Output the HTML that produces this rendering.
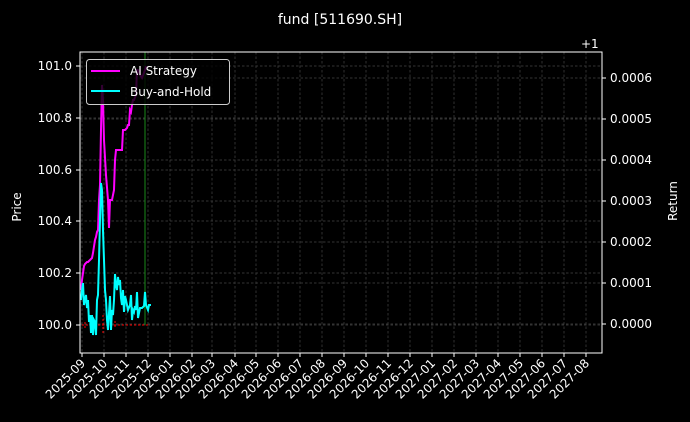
<!DOCTYPE html>
<html><head><meta charset="utf-8"><style>
html,body{margin:0;padding:0;background:#000;width:690px;height:422px;overflow:hidden}
svg{display:block}
text{font-family:"DejaVu Sans","Liberation Sans",sans-serif;fill:#fff}
</style></head><body>
<svg width="690" height="422" viewBox="0 0 690 422">
<rect width="690" height="422" fill="#000"/>
<text x="340" y="24" font-size="14" text-anchor="middle">fund [511690.SH]</text>
<text x="581" y="48" font-size="12">+1</text>
<g stroke="#444" stroke-width="0.7" stroke-dasharray="2.5,2" fill="none">
<path d="M82 52V353M104 52V353M126 52V353M148 52V353M170 52V353M192 52V353M212 52V353M235 52V353M256 52V353M278 52V353M300 52V353M322 52V353M344 52V353M366 52V353M388 52V353M410 52V353M432 52V353M454 52V353M476 52V353M498 52V353M520 52V353M542 52V353M564 52V353M586 52V353"/>
<path d="M80 66H602M80 118H602M80 170H602M80 221H602M80 273H602M80 325H602"/>
<path d="M80 78H602M80 119H602M80 160H602M80 201H602M80 242H602M80 283H602M80 324H602"/>
</g>
<g stroke="#f00" stroke-width="1" stroke-dasharray="2,2" fill="none">
<path d="M82 325H150M103 315V335M85 322V328M92 322V328M115 321V327"/>
</g>
<path d="M145 52V325" stroke="#1a8a1a" stroke-width="1"/>
<polyline fill="none" stroke="#f0f" stroke-width="2" points="81,290 82,280 84,266 85,264 87,262 88,262 90,260 92,258 93,253 95,240 96,237 97,232 98,230 99,200 100,185 101,130 102,85 103,100 104,140 106,175 108,200 109,228 110,200 112,200 114,190 115,160 116,150 118,150 120,150 122,150 123,130 125,130 127,128 128,125 129,125 130,110 131,112 132,105 133,100 134,100 136,95 137,70 138,70 140,75 142,78 145,70 146,66"/>
<polyline fill="none" stroke="#0ff" stroke-width="2" points="81,300 82,290 83,283 84,305 86,295 87,308 88,300 89,322 90,315 91,333 92,315 93,335 94,320 95,322 96,335 97,300 98,295 99,260 100,220 101,183 102,190 103,230 104,260 105,290 106,300 107,320 108,330 110,296 111,330 112,310 113,315 114,300 115,274 116,285 117,290 118,277 119,285 120,280 121,298 122,305 123,290 124,312 125,296 126,300 128,310 130,305 131,295 132,320 133,310 134,312 135,306 136,310 137,292 138,318 140,308 142,308 144,306 145,292 146,305 148,310 149,305 151,305"/>
<rect x="80" y="52" width="522" height="301" fill="none" stroke="#fff" stroke-width="1"/>
<g stroke="#fff" stroke-width="1">
<path d="M82 353v4M104 353v4M126 353v4M148 353v4M170 353v4M192 353v4M212 353v4M235 353v4M256 353v4M278 353v4M300 353v4M322 353v4M344 353v4M366 353v4M388 353v4M410 353v4M432 353v4M454 353v4M476 353v4M498 353v4M520 353v4M542 353v4M564 353v4M586 353v4"/>
<path d="M80 66h-4M80 118h-4M80 170h-4M80 221h-4M80 273h-4M80 325h-4"/>
<path d="M602 78h4M602 119h4M602 160h4M602 201h4M602 242h4M602 283h4M602 324h4"/>
</g>
<g font-size="12" text-anchor="end">
<text x="72" y="70">101.0</text><text x="72" y="122">100.8</text><text x="72" y="174">100.6</text><text x="72" y="225">100.4</text><text x="72" y="277">100.2</text><text x="72" y="329">100.0</text>
</g>
<g font-size="12">
<text x="610" y="82">0.0006</text><text x="610" y="123">0.0005</text><text x="610" y="164">0.0004</text><text x="610" y="205">0.0003</text><text x="610" y="246">0.0002</text><text x="610" y="287">0.0001</text><text x="610" y="328">0.0000</text>
</g>
<text font-size="12" text-anchor="middle" transform="translate(21,207) rotate(-90)">Price</text>
<text font-size="12" text-anchor="middle" transform="translate(677,201) rotate(-90)">Return</text>
<g font-size="12" text-anchor="end">
<text transform="translate(86,364) rotate(-45)">2025-09</text>
<text transform="translate(108,364) rotate(-45)">2025-10</text>
<text transform="translate(130,364) rotate(-45)">2025-11</text>
<text transform="translate(152,364) rotate(-45)">2025-12</text>
<text transform="translate(174,364) rotate(-45)">2026-01</text>
<text transform="translate(196,364) rotate(-45)">2026-02</text>
<text transform="translate(216,364) rotate(-45)">2026-03</text>
<text transform="translate(239,364) rotate(-45)">2026-04</text>
<text transform="translate(260,364) rotate(-45)">2026-05</text>
<text transform="translate(282,364) rotate(-45)">2026-06</text>
<text transform="translate(304,364) rotate(-45)">2026-07</text>
<text transform="translate(326,364) rotate(-45)">2026-08</text>
<text transform="translate(348,364) rotate(-45)">2026-09</text>
<text transform="translate(370,364) rotate(-45)">2026-10</text>
<text transform="translate(392,364) rotate(-45)">2026-11</text>
<text transform="translate(414,364) rotate(-45)">2026-12</text>
<text transform="translate(436,364) rotate(-45)">2027-01</text>
<text transform="translate(458,364) rotate(-45)">2027-02</text>
<text transform="translate(480,364) rotate(-45)">2027-03</text>
<text transform="translate(502,364) rotate(-45)">2027-04</text>
<text transform="translate(524,364) rotate(-45)">2027-05</text>
<text transform="translate(546,364) rotate(-45)">2027-06</text>
<text transform="translate(568,364) rotate(-45)">2027-07</text>
<text transform="translate(590,364) rotate(-45)">2027-08</text>
</g>
<rect x="86.5" y="59.5" width="143" height="45" rx="3" fill="#000" fill-opacity="0.8" stroke="#ccc" stroke-width="1"/>
<path d="M91 71H120" stroke="#f0f" stroke-width="2"/>
<path d="M91 91H120" stroke="#0ff" stroke-width="2"/>
<text x="130" y="75" font-size="12">AI Strategy</text>
<text x="130" y="96" font-size="12">Buy-and-Hold</text>
</svg>
</body></html>
